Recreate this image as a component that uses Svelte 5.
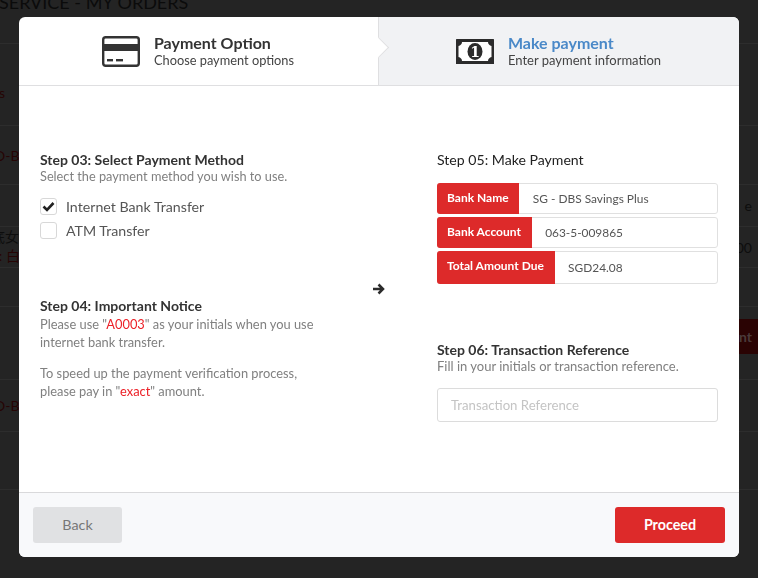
<script>
	let method = $state('internet');
	let reference = $state('');

	const bankRows = [
		{ label: 'Bank Name', value: 'SG - DBS Savings Plus' },
		{ label: 'Bank Account', value: '063-5-009865' },
		{ label: 'Total Amount Due', value: 'SGD24.08' }
	];
</script>

<div class="page">
	<h1>SERVICE - MY ORDERS</h1>
	<div class="row" style="height: 41px"></div>
	<div class="row rs" style="height: 82px"><span class="red">rs</span></div>
	<div class="row" style="height: 59px"><span class="red">O-B</span></div>
	<div class="row" style="height: 42px"><span></span><span>e</span></div>
	<div class="row" style="height: 41px"><span class="cjk">底女<br /><b class="red">n: 白</b></span><span>00</span></div>
	<div class="row" style="height: 39px"></div>
	<div class="row" style="height: 73px"><span></span><span class="action">nt</span></div>
	<div class="row" style="height: 52px"><span class="red">O-B</span></div>
	<div class="row" style="height: 58px"></div>
</div>

<div class="overlay">
	<div class="modal">
		<div class="tabs">
			<div class="tab">
				<svg width="38" height="31" viewBox="0 0 38 31">
					<rect x="1.2" y="1.2" width="35.6" height="28.6" rx="2.5" fill="#fff" stroke="#333" stroke-width="2.4" />
					<rect x="1" y="8" width="36" height="7" fill="#333" />
					<rect x="5" y="23" width="6" height="2.4" fill="#333" />
					<rect x="14" y="23" width="7" height="2.4" fill="#333" />
				</svg>
				<div class="tab-text">
					<div class="tab-title">Payment Option</div>
					<div class="tab-sub first">Choose payment options</div>
				</div>
			</div>
			<div class="tab active">
				<svg width="38" height="25" viewBox="0 0 38 25">
					<rect width="38" height="25" rx="0.5" fill="#2b2b2b" />
					<path d="M6 3h26c0 2 1.500 3.500 3.500 4v11c-2 .5-3.500 2-3.500 4H6c0-2-1.500-3.500-3.500-4V7C4.500 6.500 6 5 6 3z" fill="#fff" />
					<ellipse cx="19" cy="12.500" rx="7.500" ry="8.500" fill="#2b2b2b" />
					<text x="19" y="17.500" text-anchor="middle" class="note-digit">1</text>
				</svg>
				<div class="tab-text">
					<div class="tab-title blue">Make payment</div>
					<div class="tab-sub">Enter payment information</div>
				</div>
			</div>
			<span class="chevron"></span>
		</div>

		<div class="body">
			<div class="col">
				<section class="step03">
					<h3>Step 03: Select Payment Method</h3>
					<p>Select the payment method you wish to use.</p>
					<div class="options">
						<button class="option" onclick={() => (method = 'internet')}>
							<span class="box">
								{#if method === 'internet'}
									<svg width="13" height="11" viewBox="0 0 13 11">
										<path d="M1.500 5.500l3.500 3.500 6.500-7" fill="none" stroke="#222" stroke-width="2.600" />
									</svg>
								{/if}
							</span>
							Internet Bank Transfer
						</button>
						<button class="option" onclick={() => (method = 'atm')}>
							<span class="box">
								{#if method === 'atm'}
									<svg width="13" height="11" viewBox="0 0 13 11">
										<path d="M1.500 5.500l3.500 3.500 6.500-7" fill="none" stroke="#222" stroke-width="2.600" />
									</svg>
								{/if}
							</span>
							ATM Transfer
						</button>
					</div>
				</section>
				<section class="step04">
					<h3>Step 04: Important Notice</h3>
					<p>Please use "<em>A0003</em>" as your initials when you use internet bank transfer.</p>
					<p class="second">To speed up the payment verification process, please pay in "<em>exact</em>" amount.</p>
				</section>
			</div>

			<div class="arrow">
				<svg width="13" height="12" viewBox="0 0 13 12">
					<path d="M1 6h9M6.500 1.500L11 6l-4.500 4.500" fill="none" stroke="#2b2b2b" stroke-width="2.500" />
				</svg>
			</div>

			<div class="col">
				<section class="step05">
					<h3>Step 05: Make Payment</h3>
					<div class="bank-rows">
						{#each bankRows as row}
							<div class="bank-row">
								<span class="bank-label">{row.label}</span>
								<span class="bank-value">{row.value}</span>
							</div>
						{/each}
					</div>
				</section>
				<section class="step06">
					<h3>Step 06: Transaction Reference</h3>
					<p>Fill in your initials or transaction reference.</p>
					<input type="text" placeholder="Transaction Reference" bind:value={reference} />
				</section>
			</div>
		</div>

		<div class="footer">
			<button class="btn back">Back</button>
			<button class="btn proceed">Proceed</button>
		</div>
	</div>
</div>

<style>
	:global(body) {
		background: #242424;
		overflow: hidden;
	}
	.page {
		height: 578px;
		overflow: hidden;
		background: #242424;
		font-family: Lato, sans-serif;
		font-size: 14px;
		color: #0d0d0d;
	}
	h1 {
		margin: -8px 0 0 -1px;
		height: 11px;
		font-size: 18px;
		line-height: 20px;
		font-weight: 400;
		white-space: nowrap;
		color: #0b0b0b;
	}
	.row {
		display: flex;
		justify-content: space-between;
		align-items: center;
		box-sizing: border-box;
		border-bottom: 1px solid #2d2d2d;
		white-space: nowrap;
	}
	.row.rs {
		padding-top: 16px;
	}
	.row > span:first-child {
		margin-left: -6px;
	}
	.row > span:last-child {
		margin-right: 6px;
	}
	.red {
		color: #260404;
		font-weight: 400;
	}
	.cjk {
		font-family: Lato, 'Noto Sans CJK SC', sans-serif;
		font-size: 14px;
		line-height: 19px;
		transform: translate(-3px, -1px);
	}
	.action {
		align-self: flex-start;
		margin-top: 12px;
		padding: 9px 6px 9px 14px;
		margin-right: 0 !important;
		background: #2a0303;
		color: #4a3a3a;
		font-weight: 700;
	}

	.overlay {
		position: fixed;
		inset: 0;
		display: flex;
		justify-content: center;
		align-items: flex-start;
		padding-top: 17px;
		font-family: Lato, sans-serif;
	}
	.modal {
		display: flex;
		flex-direction: column;
		width: 720px;
		height: 540px;
		background: #fff;
		border-radius: 6px;
		overflow: hidden;
	}

	.tabs {
		position: relative;
		display: grid;
		grid-template-columns: 359px 361px;
		height: 69px;
		border-bottom: 1px solid #dfdfe1;
		box-sizing: border-box;
	}
	.tab {
		display: flex;
		align-items: center;
		justify-content: center;
		gap: 14px;
		padding-right: 1px;
	}
	.tab.active {
		background: #f1f2f4;
		border-left: 1px solid #dfdfe1;
	}
	.tab-text {
		margin-top: -2px;
	}
	.tab-title {
		font-size: 16px;
		line-height: 19px;
		font-weight: 700;
		color: #333;
	}
	.tab-title.blue {
		color: #4a89c8;
	}
	.tab-sub {
		font-size: 13px;
		line-height: 16px;
		color: #444;
	}
	.tab-sub.first {
		font-size: 12.800px;
	}
	.chevron {
		position: absolute;
		left: 352px;
		top: 23px;
		width: 14px;
		height: 14px;
		background: #fff;
		border-top: 1px solid #dfdfe1;
		border-right: 1px solid #dfdfe1;
		transform: rotate(45deg);
	}
	.note-digit {
		font-family: 'DejaVu Serif', serif;
		font-size: 14px;
		font-weight: 700;
		fill: #fff;
	}

	.body {
		flex: 1;
		display: grid;
		grid-template-columns: 281px 1fr 281px;
		align-items: center;
		padding: 0 21px;
	}
	.col {
		display: flex;
		flex-direction: column;
		height: 100%;
	}
	.arrow {
		display: flex;
		justify-content: center;
		padding-right: 2px;
	}
	h3 {
		margin: 0;
		font-size: 14px;
		line-height: 16px;
		font-weight: 700;
		color: #333;
	}
	p {
		margin: 0;
		font-size: 12.850px;
		line-height: 18px;
		color: #808080;
	}
	em {
		font-style: normal;
		color: #ec2027;
	}
	.step03 {
		padding-top: 66px;
	}
	.step03 p {
		font-size: 12.750px;
		line-height: 17px;
	}
	.options {
		display: flex;
		flex-direction: column;
		gap: 6px;
		margin-top: 12px;
	}
	.option {
		all: unset;
		display: flex;
		align-items: center;
		gap: 9px;
		height: 18px;
		font-size: 14.200px;
		color: #555;
		cursor: pointer;
	}
	.box {
		display: flex;
		align-items: center;
		justify-content: center;
		box-sizing: border-box;
		width: 17px;
		height: 17px;
		border: 1px solid #d8d8d8;
		border-radius: 3px;
		background: #fff;
	}
	.step04 {
		margin-top: 59px;
	}
	.step04 h3 {
		margin-bottom: 1px;
	}
	.second {
		margin-top: 13px;
	}

	.step05 {
		padding-top: 66px;
	}
	.step05 h3 {
		font-weight: 400;
		font-size: 14.100px;
		color: #222;
	}
	.bank-rows {
		display: flex;
		flex-direction: column;
		gap: 3px;
		margin-top: 15px;
	}
	.bank-row {
		display: flex;
		height: 31px;
		box-sizing: border-box;
		border: 1px solid #e0e0e0;
		border-radius: 3px;
		font-size: 12px;
		color: #555;
	}
	.bank-row:last-child {
		height: 33px;
	}
	.bank-row:last-child .bank-label {
		padding-bottom: 5px;
	}
	.bank-label {
		display: flex;
		align-items: center;
		margin: -1px 0 -1px -1px;
		padding: 0 10.700px 3px 10px;
		background: #dd2a2a;
		border-radius: 3px 0 0 3px;
		color: #fff;
		font-weight: 700;
	}
	.bank-value {
		display: flex;
		align-items: center;
		padding-left: 13.500px;
		font-size: 11.900px;
	}
	.step06 {
		margin-top: 58px;
	}
	.step06 p {
		font-size: 13px;
		line-height: 17px;
	}
	input {
		display: block;
		width: 100%;
		height: 34px;
		margin-top: 13px;
		padding: 0 13px;
		box-sizing: border-box;
		border: 1px solid #dcdcdc;
		border-radius: 3px;
		font-family: inherit;
		font-size: 13.200px;
		color: #555;
		outline: none;
	}
	input::placeholder {
		color: #c4c4c4;
	}

	.footer {
		display: flex;
		justify-content: space-between;
		align-items: center;
		box-sizing: border-box;
		height: 65px;
		padding: 0 14px;
		background: #f8f9fb;
		border-top: 1px solid #d9d9db;
	}
	.btn {
		height: 36px;
		padding: 0 0 2px;
		border: none;
		border-radius: 3px;
		font-family: inherit;
		font-size: 14.300px;
		cursor: pointer;
	}
	.back {
		width: 89px;
		background: #e0e1e3;
		color: #777;
	}
	.proceed {
		width: 110px;
		background: #dd2a2a;
		color: #fff;
		font-weight: 700;
	}
</style>
